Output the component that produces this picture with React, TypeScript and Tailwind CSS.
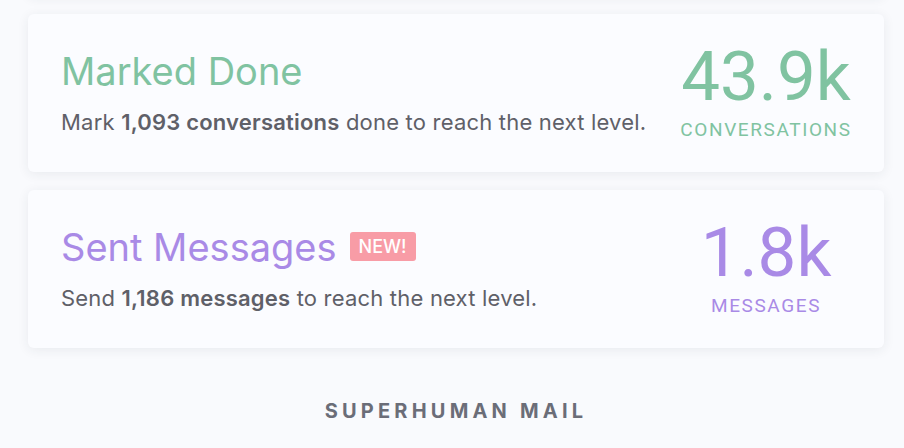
export default function App() {
    const cards = [
        {
            title: "Marked Done",
            color: "text-[#80c3a1]",
            isNew: false,
            before: "Mark ",
            bold: "1,093 conversations",
            after: " done to reach the next level.",
            value: "43.9k",
            unit: "CONVERSATIONS",
        },
        {
            title: "Sent Messages",
            color: "text-[#a98ae6]",
            isNew: true,
            before: "Send ",
            bold: "1,186 messages",
            after: " to reach the next level.",
            value: "1.8k",
            unit: "MESSAGES",
        },
    ];

    return (
        <div className="min-h-[448px] bg-[#f9fafd] pl-[28px] pr-[20px] overflow-hidden font-['Inter',sans-serif]">
            <div className="h-[100px] -mt-[104px] rounded-[6px] bg-[#fbfcff] shadow-[0_2px_12px_rgba(40,45,70,0.08)]" />
            <div className="flex flex-col gap-[18px] pt-[18px]">
                {cards.map((card) => (
                    <div
                        key={card.title}
                        className="h-[158px] flex items-center justify-between rounded-[6px] bg-[#fbfcff] shadow-[0_2px_12px_rgba(40,45,70,0.08)] pl-[33px] pr-[26px]"
                    >
                        <div className="flex flex-col">
                            <div className="flex items-center gap-[13px]">
                                <h3 className={`text-[38px] leading-[46px] ${card.color}`}>{card.title}</h3>
                                {card.isNew && (
                                    <span className="rounded-[3px] bg-[#f89ca6] px-[9px] h-[29px] flex items-center text-[18px] font-medium text-white">
                                        NEW!
                                    </span>
                                )}
                            </div>
                            <p className="mt-[12px] text-[22px] tracking-[0.2px] text-[#5f6068]">
                                {card.before}
                                <span className="font-semibold">{card.bold}</span>
                                {card.after}
                            </p>
                        </div>
                        <div className={`w-[184px] flex flex-col items-center font-['Roboto',sans-serif] ${card.color}`}>
                            <div className="text-[69px] leading-[70px]">{card.value}</div>
                            <div className="mt-[4px] text-[19px] tracking-[1.6px]">{card.unit}</div>
                        </div>
                    </div>
                ))}
            </div>
            <div className="pt-[48px] text-center text-[20px] font-bold tracking-[4.2px] text-[#6b6d78]">
                SUPERHUMAN MAIL
            </div>
        </div>
    );
}
